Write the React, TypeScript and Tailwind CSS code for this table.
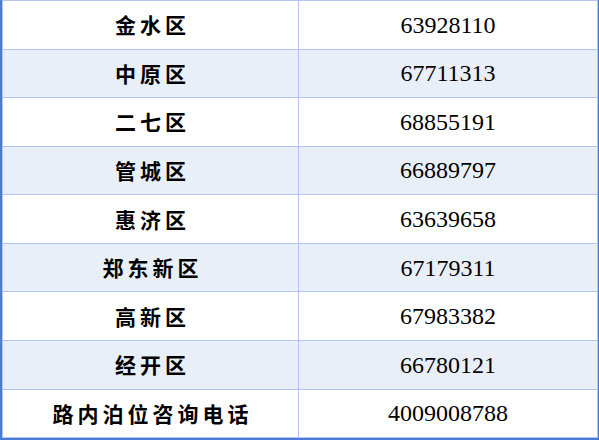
import React from "react";

const rows: [string, string][] = [
  ["金水区", "63928110"],
  ["中原区", "67711313"],
  ["二七区", "68855191"],
  ["管城区", "66889797"],
  ["惠济区", "63639658"],
  ["郑东新区", "67179311"],
  ["高新区", "67983382"],
  ["经开区", "66780121"],
  ["路内泊位咨询电话", "4009008788"],
];

export default function App() {
  return (
    <div className="w-[599px] h-[440px] bg-white border-l-2 border-r border-b-2 border-[#4a7bd8]">
      <div className="h-full flex flex-col border border-[#b4c5ec]">
        {rows.map(([name, phone], i) => (
          <div
            key={name}
            className={`flex-1 flex ${i < rows.length - 1 ? "border-b border-[#b4c5ec]" : ""} ${i % 2 === 1 ? "bg-[#e9eff9]" : "bg-white"}`}
          >
            <div className="w-[296px] border-r border-[#b4c5ec] flex items-center justify-center">
              <span
                className="text-[21px] font-bold text-black tracking-[4px] pl-[4px] leading-none"
                style={{ fontFamily: '"Noto Sans CJK SC", sans-serif' }}
              >
                {name}
              </span>
            </div>
            <div className="flex-1 flex items-center justify-center">
              <span
                className="text-[24px] text-black leading-none"
                style={{ fontFamily: '"Liberation Serif", serif' }}
              >
                {phone}
              </span>
            </div>
          </div>
        ))}
      </div>
    </div>
  );
}
